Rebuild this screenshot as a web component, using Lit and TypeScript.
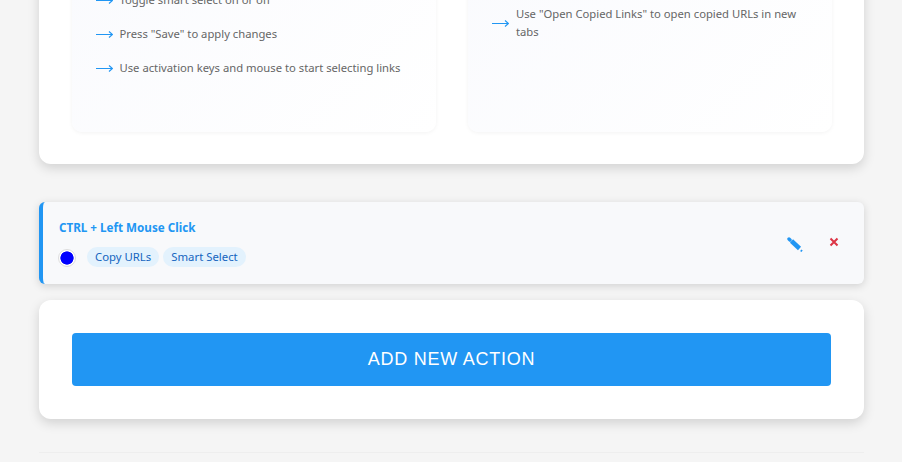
import { LitElement, html, css } from "lit";
import { customElement } from "lit/decorators.js";

const arrow = html`<svg class="arrow" width="17" height="10" viewBox="0 0 17 10" fill="none" stroke="#2196f3"><path d="M0 5.5H16.5M13 2.5L16.5 5.5L13 8.5" stroke-width="1.15"/></svg>`;

@customElement("app-root")
export class AppRoot extends LitElement {
  static styles = css`
    :host { display: block; width: 902px; height: 462px; overflow: hidden; background: #f5f5f5; font-family: "Noto Sans", sans-serif; }
    .page { display: flex; flex-direction: column; margin: -200px 38px 0 39px; }
    .card { background: #fff; border-radius: 12px; box-shadow: 0 4px 12px rgba(0,0,0,.15); }
    .guide { display: grid; grid-template-columns: 364px 364px; gap: 32px; padding: 0 32px 32px 33px; height: 364px; box-sizing: border-box; }
    .panel { background: linear-gradient(135deg, #f8f9fd, #fff); border-radius: 10px; box-shadow: 0 1px 4px rgba(0,0,0,.05); padding: 191px 24px 0; display: flex; flex-direction: column; gap: 16px; }
    .panel.right { padding: 205px 24px 0; }
    .item { display: flex; align-items: center; gap: 6.5px; font-size: 11.25px; line-height: 18px; color: #666; }
    .right .item { gap: 7px; }
    .arrow { flex: none; }
    .action { margin-top: 38px; height: 82px; box-sizing: border-box; background: #f8f9fb; border-left: 4px solid #2196f3; border-radius: 6px; box-shadow: 0 2px 8px rgba(0,0,0,.15); display: flex; align-items: center; justify-content: space-between; padding: 0 25px 0 15px; }
    .info { display: flex; flex-direction: column; gap: 11px; padding-top: 1px; }
    .title { font-size: 11.65px; font-weight: 700; line-height: 17px; color: #2196f3; margin-left: 1px; margin-top: -1px; }
    .chips { display: flex; align-items: center; gap: 4px; }
    .dot { box-sizing: border-box; width: 18px; height: 18px; border-radius: 50%; border: 1px solid #ddd; background: radial-gradient(circle at center, #0000ff 6.3px, #fff 6.9px); margin: 2px 7px 0 0; }
    .chip { height: 20px; padding: 0 8px; border-radius: 10px; background: #e3f2fd; color: #1565c0; font-size: 11.35px; line-height: 20px; }
    .btns { display: flex; align-items: center; gap: 26px; }
    .btns svg { display: block; }
    .close { margin-bottom: 2px; }
    .add { margin-top: 16px; padding: 33px; }
    .add button { display: block; width: 759px; height: 53px; border: 0; border-radius: 4px; background: #2196f3; color: #fff; font: 18px "Liberation Sans", Arial, sans-serif; letter-spacing: .75px; padding: 0; }
    .rule { margin-top: 33px; height: 1px; background: #eee; }
  `;
  render() {
    return html`<div class="page">
      <section class="card guide">
        <div class="panel">
          <div class="item">${arrow}<span>Toggle smart select on or off</span></div>
          <div class="item">${arrow}<span>Press "Save" to apply changes</span></div>
          <div class="item">${arrow}<span>Use activation keys and mouse to start selecting links</span></div>
        </div>
        <div class="panel right">
          <div class="item">${arrow}<span>Use "Open Copied Links" to open copied URLs in new tabs</span></div>
        </div>
      </section>
      <section class="action">
        <div class="info">
          <div class="title">CTRL + Left Mouse Click</div>
          <div class="chips"><span class="dot"></span><span class="chip">Copy URLs</span><span class="chip">Smart Select</span></div>
        </div>
        <div class="btns">
          <svg width="16" height="18" viewBox="0 0 16 18"><path d="M4.5 7L12.5 14.5" stroke="#2196f3" stroke-width="4.5"/><path d="M2 5L3 6" stroke="#2196f3" stroke-width="3.4" stroke-linecap="round"/><path d="M13.8 16.2L15 17.3" stroke="#2196f3" stroke-width="2"/></svg>
          <svg class="close" width="10" height="10" viewBox="0 0 10 10"><path d="M1.5 1.5L8.5 8.5M8.5 1.5L1.5 8.5" stroke="#dc3545" stroke-width="2"/></svg>
        </div>
      </section>
      <section class="card add"><button>ADD NEW ACTION</button></section>
      <div class="rule"></div>
    </div>`;
  }
}
